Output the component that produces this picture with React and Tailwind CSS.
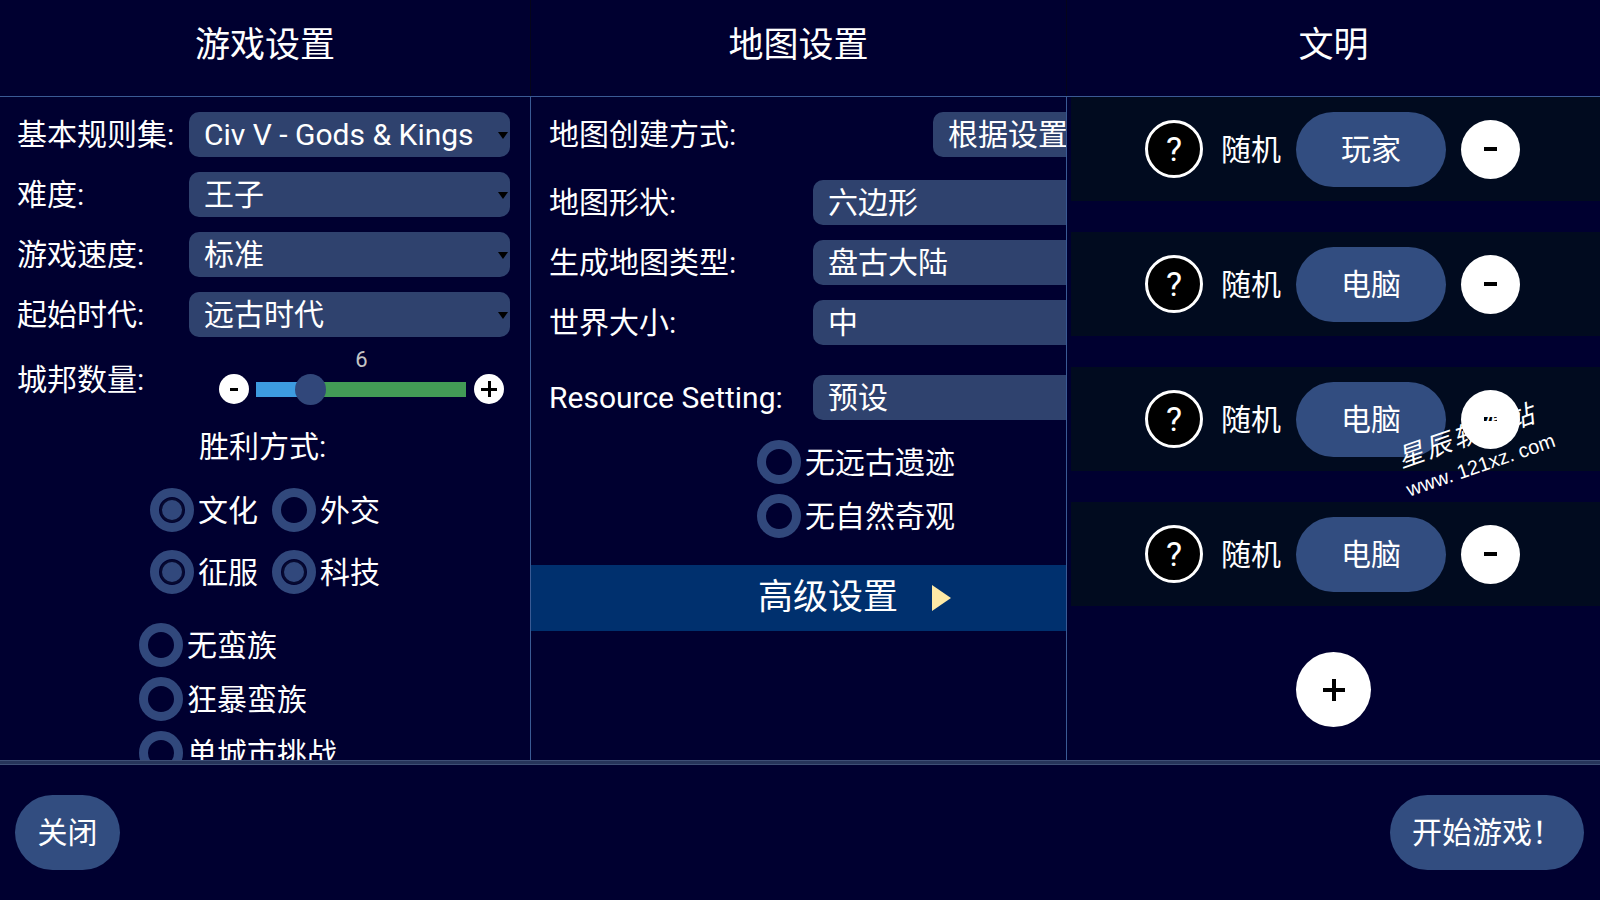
import React from "react";

const FONT = "font-['Roboto','Noto_Sans_CJK_SC',sans-serif]";

function Dropdown({ text, w = "w-[321px]", arrow = true }) {
  return (
    <div
      className={`relative ${w} h-[45px] shrink-0 rounded-[10px] bg-[#2f426e] flex items-center pl-[15px] text-[30px] whitespace-nowrap`}
    >
      {text}
      {arrow && (
        <span className="absolute right-[2px] top-[20px] w-0 h-0 border-l-[5px] border-r-[5px] border-t-[7px] border-l-transparent border-r-transparent border-t-black" />
      )}
    </div>
  );
}

function Radio({ on }) {
  return (
    <div className="w-[44px] h-[44px] shrink-0 rounded-full border-[9px] border-[#31487c] flex items-center justify-center">
      {on && <div className="w-[20px] h-[20px] rounded-full bg-[#31487c] shadow-[0_0_0_2px_#070a30]" />}
    </div>
  );
}

function Choice({ on, label, className = "" }) {
  return (
    <div className={`flex items-center gap-[4px] h-[44px] ${className}`}>
      <Radio on={on} />
      <span className="text-[30px] whitespace-nowrap">{label}</span>
    </div>
  );
}

function Circle({ size, children }) {
  return (
    <div className={`${size} shrink-0 rounded-full bg-white flex items-center justify-center`}>
      {children}
    </div>
  );
}

function PlayerRow({ kind }) {
  return (
    <div className="h-[104px] bg-[#010b1f] flex items-center justify-center pr-[6px]">
      <div className="w-[58px] h-[58px] rounded-full bg-black border-[3px] border-white flex items-center justify-center text-[34px] leading-none">
        ?
      </div>
      <span className="ml-[18px] text-[30px]">随机</span>
      <div className="ml-[15px] w-[150px] h-[75px] rounded-full bg-[#324d80] flex items-center justify-center text-[30px]">
        {kind}
      </div>
      <div className="ml-[15px]">
        <Circle size="w-[59px] h-[59px]">
          <span className="w-[13px] h-[4px] bg-black" />
        </Circle>
      </div>
    </div>
  );
}

export default function App() {
  const leftRows = [
    ["基本规则集:", "Civ V - Gods & Kings"],
    ["难度:", "王子"],
    ["游戏速度:", "标准"],
    ["起始时代:", "远古时代"],
  ];

  return (
    <div className={`${FONT} relative w-[1600px] h-[900px] bg-[#000030] text-white flex flex-col overflow-hidden`}>
      {/* headers */}
      <div className="h-[96px] grid grid-cols-[531px_536px_533px]">
        <div className="border-r border-[#05051a] flex items-center justify-center pb-[4px] text-[35px]">游戏设置</div>
        <div className="border-r border-[#05051a] flex items-center justify-center pb-[4px] text-[35px]">地图设置</div>
        <div className="flex items-center justify-center pb-[4px] text-[35px]">文明</div>
      </div>
      <div className="h-px bg-[#3a5a94]" />

      <div className="h-[663px] grid grid-cols-[531px_536px_533px]">
        {/* game settings */}
        <div className="border-r border-[#3a5a94] overflow-hidden pt-[15px]">
          <div className="flex flex-col gap-[15px]">
            {leftRows.map(([label, value]) => (
              <div key={label} className="flex items-center h-[45px]">
                <span className="w-[189px] pl-[17px] text-[30px] whitespace-nowrap">{label}</span>
                <Dropdown text={value} />
              </div>
            ))}
          </div>

          <div className="mt-[9px] flex">
            <span className="w-[219px] pl-[17px] mt-[16px] text-[30px] leading-[36px]">城邦数量:</span>
            <div className="flex flex-col">
              <div className="h-[28px] text-center text-[22px] leading-[28px] text-[#c4c4c4]">6</div>
              <div className="h-[30px] flex items-center">
                <Circle size="w-[30px] h-[30px]">
                  <span className="w-[8px] h-[3px] bg-black" />
                </Circle>
                <div className="relative ml-[7px] w-[210px] h-[15px] flex">
                  <div className="w-[54px] bg-[#3d9be0]" />
                  <div className="flex-1 bg-[#429b56]" />
                  <div className="absolute left-[39px] top-[-8px] w-[31px] h-[31px] rounded-full bg-[#31477a]" />
                </div>
                <div className="ml-[8px]">
                  <Circle size="w-[30px] h-[30px]">
                    <span className="relative w-[16px] h-[16px] flex items-center justify-center">
                      <span className="absolute w-[16px] h-[3px] bg-black" />
                      <span className="absolute w-[3px] h-[16px] bg-black" />
                    </span>
                  </Circle>
                </div>
              </div>
            </div>
          </div>

          <div className="mt-[25px] pl-[199px] text-[30px] leading-[36px]">胜利方式:</div>

          <div className="mt-[23px] pl-[150px] flex flex-col gap-[18px]">
            <div className="flex">
              <Choice on label="文化" className="w-[122px]" />
              <Choice label="外交" />
            </div>
            <div className="flex">
              <Choice on label="征服" className="w-[122px]" />
              <Choice on label="科技" />
            </div>
          </div>

          <div className="mt-[29px] pl-[139px] flex flex-col gap-[10px]">
            <Choice label="无蛮族" />
            <Choice label="狂暴蛮族" />
            <Choice label="单城市挑战" />
          </div>
        </div>

        {/* map settings */}
        <div className="border-r border-[#3a5a94] overflow-hidden pt-[15px]">
          <div className="flex items-center h-[45px]">
            <span className="w-[402px] shrink-0 pl-[18px] text-[30px] whitespace-nowrap">地图创建方式:</span>
            <Dropdown text="根据设置" w="w-[300px]" arrow={false} />
          </div>
          <div className="mt-[23px] flex flex-col gap-[15px]">
            {[
              ["地图形状:", "六边形"],
              ["生成地图类型:", "盘古大陆"],
              ["世界大小:", "中"],
            ].map(([label, value]) => (
              <div key={label} className="flex items-center h-[45px]">
                <span className="w-[282px] shrink-0 pl-[18px] text-[30px] whitespace-nowrap">{label}</span>
                <Dropdown text={value} w="w-[330px]" arrow={false} />
              </div>
            ))}
          </div>
          <div className="mt-[30px] flex items-center h-[45px]">
            <span className="w-[282px] shrink-0 pl-[18px] text-[30px] whitespace-nowrap">Resource Setting:</span>
            <Dropdown text="预设" w="w-[330px]" arrow={false} />
          </div>

          <div className="mt-[20px] pl-[226px] flex flex-col gap-[10px]">
            <Choice label="无远古遗迹" />
            <Choice label="无自然奇观" />
          </div>

          <div className="mt-[27px] h-[66px] bg-[#00306e] flex items-center pl-[227px]">
            <span className="text-[35px]">高级设置</span>
            <span className="ml-[34px] w-0 h-0 border-l-[19px] border-y-[13px] border-y-transparent border-l-[#fde9a6]" />
          </div>
        </div>

        {/* civilizations */}
        <div className="overflow-hidden pl-[4px]">
          <div className="flex flex-col gap-[31px]">
            <PlayerRow kind="玩家" />
            <PlayerRow kind="电脑" />
            <PlayerRow kind="电脑" />
            <PlayerRow kind="电脑" />
          </div>
          <div className="mt-[46px] flex justify-center pr-[4px]">
            <Circle size="w-[75px] h-[75px]">
              <span className="relative w-[22px] h-[22px] flex items-center justify-center">
                <span className="absolute w-[22px] h-[4px] bg-black" />
                <span className="absolute w-[4px] h-[22px] bg-black" />
              </span>
            </Circle>
          </div>
        </div>
      </div>

      <div className="h-[5px] bg-[#26345a] border-y border-[#3e4f76]" />

      <div className="flex-1 flex items-center justify-between pl-[15px] pr-[16px]">
        <button className="w-[105px] h-[75px] rounded-full bg-[#324d80] text-[30px] text-white">关闭</button>
        <button className="w-[194px] h-[75px] rounded-full bg-[#324d80] text-[30px] text-white">开始游戏！</button>
      </div>

      {/* watermark */}
      <div className="absolute left-[1394px] top-[446px] -rotate-[19deg] origin-top-left pointer-events-none text-white whitespace-nowrap">
        <div className="text-[26px] italic leading-[28px] tracking-[3px]">星辰软件站</div>
        <div className="mt-[5px] -ml-[2px] text-[20px] leading-[26px] font-['Liberation_Sans',sans-serif]">www. 121xz. com</div>
      </div>
    </div>
  );
}
